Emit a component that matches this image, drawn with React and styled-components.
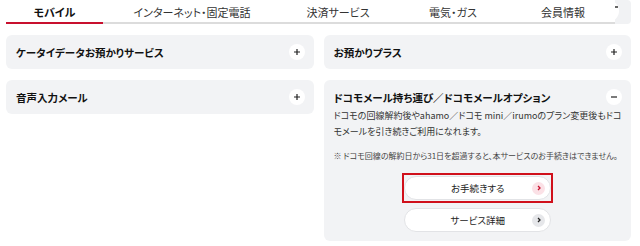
import React from 'react'
import styled, { createGlobalStyle } from 'styled-components'

const GlobalStyle = createGlobalStyle`
    body {
        margin: 0;
        background: #fff;
        font-family: "Noto Sans CJK JP", "Noto Sans", sans-serif;
        color: #1a1a1a;
        font-feature-settings: "palt";
    }
`

const Page = styled.div`
    padding: 0 9px 0 6px;
`

const TabBar = styled.div`
    display: flex;
    align-items: stretch;
    height: 24px;
`
const TabList = styled.ul`
    display: flex;
    flex: 1 1 auto;
    margin: 0;
    padding: 0;
    list-style: none;
    border-bottom: 2px solid #dcdcdc;
    box-sizing: border-box;
`
const Tab = styled.li`
    width: ${props => props.w}px;
    display: flex;
    align-items: center;
    justify-content: center;
    padding-top: 1px;
    font-size: 11px;
    font-weight: ${props => props.active ? 700 : 400};
    color: ${props => props.active ? '#111' : '#333'};
    margin-bottom: -2px;
    border-bottom: 2px solid ${props => props.active ? '#c8102e' : 'transparent'};
    white-space: nowrap;
`
const ScrollButton = styled.div`
    position: relative;
    width: 17px;
    background: #f1f2f4;
    border-radius: 0 4px 4px 0;
    &::before {
        content: "";
        position: absolute;
        left: -18px;
        top: 0;
        width: 22px;
        height: 22px;
        border-radius: 50%;
        background: #fff;
    }
    &::after {
        content: "";
        position: absolute;
        left: 0;
        top: 6px;
        width: 3px;
        height: 2px;
        background: #666;
    }
`

const Grid = styled.div`
    display: grid;
    grid-template-columns: 1fr 1fr;
    column-gap: 10px;
    margin-top: 11px;
    align-items: start;
`
const Column = styled.div`
    display: flex;
    flex-direction: column;
    gap: 11px;
`
const Card = styled.div`
    background: #f2f3f5;
    border-radius: 6px;
    padding: 9px 9px 9px 10px;
`
const CardHead = styled.div`
    display: flex;
    align-items: center;
    justify-content: space-between;
    height: 16px;
`
const CardTitle = styled.div`
    font-size: 10.5px;
    font-weight: 700;
    color: #111;
`
const Toggle = styled.span`
    width: 16px;
    height: 16px;
    border-radius: 50%;
    background: #fff;
    display: flex;
    align-items: center;
    justify-content: center;
    flex: none;
    svg {
        display: block;
    }
`
const Body = styled.div`
    padding-top: 3px;
`
const Lead = styled.p`
    margin: 0;
    font-size: 9px;
    line-height: 16px;
    color: #333;
`
const Note = styled.p`
    margin: 10px 0 0;
    font-size: 8px;
    line-height: 12px;
    color: #444;
`
const Actions = styled.div`
    display: flex;
    flex-direction: column;
    align-items: center;
    gap: 5px;
    margin-top: 11px;
`
const Highlight = styled.div`
    border: 2px solid #d0101b;
    padding: 1px 0;
    display: flex;
`
const Pill = styled.a`
    position: relative;
    width: 147px;
    height: 24px;
    box-sizing: border-box;
    border-radius: 12px;
    background: #fff;
    border: 1px solid #e2e3e6;
    display: flex;
    align-items: center;
    justify-content: center;
    font-size: 9.5px;
    color: #222;
    cursor: pointer;
`
const Arrow = styled.span`
    position: absolute;
    right: 5px;
    top: 50%;
    margin-top: -6.5px;
    width: 13px;
    height: 13px;
    border-radius: 50%;
    background: ${props => props.primary ? '#fbe1e6' : '#e6e7ea'};
    color: ${props => props.primary ? '#c8102e' : '#222'};
    display: flex;
    align-items: center;
    justify-content: center;
`

const Plus = () => (
    <svg width="8" height="8" viewBox="0 0 8 8">
        <path d="M4 1v6M1 4h6" stroke="#222" strokeWidth="1.2" />
    </svg>
)
const Minus = () => (
    <svg width="8" height="8" viewBox="0 0 8 8">
        <path d="M1 4h6" stroke="#222" strokeWidth="1.2" />
    </svg>
)
const Chevron = () => (
    <svg width="6" height="6" viewBox="0 0 6 6">
        <path d="M2 1l2 2-2 2" fill="none" stroke="currentColor" strokeWidth="1.3" />
    </svg>
)

const tabs = [
    { label: 'モバイル', w: 97, active: true },
    { label: 'インターネット・固定電話', w: 178 },
    { label: '決済サービス', w: 114 },
    { label: '電気・ガス', w: 116 },
    { label: '会員情報', w: 104 },
]

const Accordion = ({ title, open, children }) => (
    <Card>
        <CardHead>
            <CardTitle>{title}</CardTitle>
            <Toggle>{open ? <Minus /> : <Plus />}</Toggle>
        </CardHead>
        {open && <Body>{children}</Body>}
    </Card>
)

const App = () => {
    return (
        <Page>
            <GlobalStyle />
            <TabBar>
                <TabList>
                    {tabs.map(t => <Tab key={t.label} w={t.w} active={t.active}>{t.label}</Tab>)}
                </TabList>
                <ScrollButton />
            </TabBar>
            <Grid>
                <Column>
                    <Accordion title="ケータイデータお預かりサービス" />
                    <Accordion title="音声入力メール" />
                </Column>
                <Column>
                    <Accordion title="お預かりプラス" />
                    <Accordion title="ドコモメール持ち運び／ドコモメールオプション" open>
                        <Lead>ドコモの回線解約後やahamo／ドコモ mini／irumoのプラン変更後もドコモメールを引き続きご利用になれます。</Lead>
                        <Note>※ ドコモ回線の解約日から31日を超過すると、本サービスのお手続きはできません。</Note>
                        <Actions>
                            <Highlight>
                                <Pill>お手続きする<Arrow primary><Chevron /></Arrow></Pill>
                            </Highlight>
                            <Pill>サービス詳細<Arrow><Chevron /></Arrow></Pill>
                        </Actions>
                    </Accordion>
                </Column>
            </Grid>
        </Page>
    )
}

export default App
